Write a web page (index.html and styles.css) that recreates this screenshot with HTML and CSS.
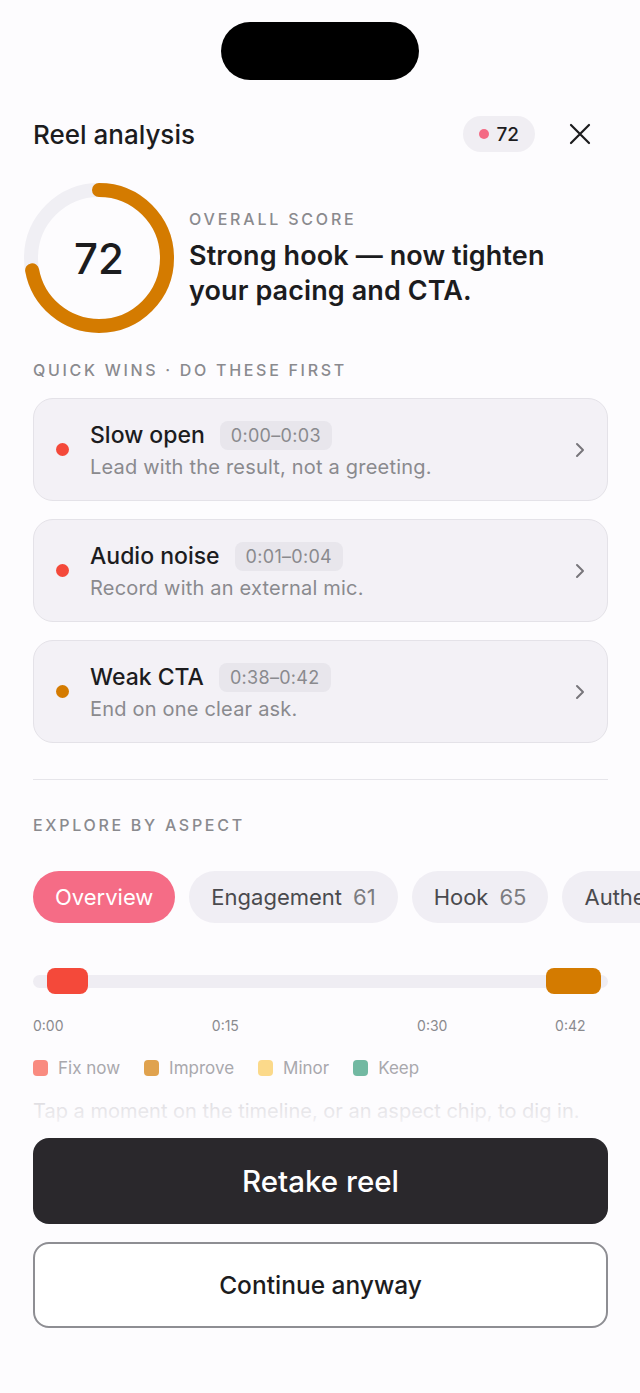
FILE: index.html
```html
<!DOCTYPE html>
<html lang="en">
<head>
<meta charset="utf-8">
<title>Reel analysis</title>
<link rel="stylesheet" href="styles.css">
</head>
<body>
<div class="screen">
  <div class="island"></div>
  <main class="content">
    <header class="topbar">
      <h1 class="title">Reel analysis</h1>
      <div class="score-pill"><span class="pill-dot"></span><span>72</span></div>
      <button class="close" aria-label="Close">
        <svg viewBox="0 0 22 22"><path d="M2 2 L20 20 M20 2 L2 20"/></svg>
      </button>
    </header>

    <section class="score">
      <div class="ring">
        <svg viewBox="0 0 150 150">
          <circle class="ring-track" cx="75" cy="75" r="68"/>
          <circle class="ring-fill" cx="75" cy="75" r="68" stroke-dasharray="307.6 427.3" transform="rotate(-90 75 75)"/>
        </svg>
        <span class="ring-value">72</span>
      </div>
      <div class="score-text">
        <div class="score-label">OVERALL SCORE</div>
        <p class="score-headline">Strong hook — now tighten your pacing and CTA.</p>
      </div>
    </section>

    <div class="section-label first">QUICK WINS · DO THESE FIRST</div>
    <div class="wins">
      <div class="win">
        <span class="win-dot red"></span>
        <div class="win-body">
          <div class="win-head"><span class="win-title">Slow open</span><span class="win-time">0:00–0:03</span></div>
          <div class="win-desc">Lead with the result, not a greeting.</div>
        </div>
        <svg class="chev" viewBox="0 0 10 16"><path d="M2 2 L8 8 L2 14"/></svg>
      </div>
      <div class="win">
        <span class="win-dot red"></span>
        <div class="win-body">
          <div class="win-head"><span class="win-title">Audio noise</span><span class="win-time">0:01–0:04</span></div>
          <div class="win-desc">Record with an external mic.</div>
        </div>
        <svg class="chev" viewBox="0 0 10 16"><path d="M2 2 L8 8 L2 14"/></svg>
      </div>
      <div class="win">
        <span class="win-dot orange"></span>
        <div class="win-body">
          <div class="win-head"><span class="win-title">Weak CTA</span><span class="win-time">0:38–0:42</span></div>
          <div class="win-desc">End on one clear ask.</div>
        </div>
        <svg class="chev" viewBox="0 0 10 16"><path d="M2 2 L8 8 L2 14"/></svg>
      </div>
    </div>

    <div class="divider"></div>

    <div class="section-label explore">EXPLORE BY ASPECT</div>
    <div class="chips">
      <span class="chip active">Overview</span>
      <span class="chip">Engagement <span class="chip-num">61</span></span>
      <span class="chip">Hook <span class="chip-num">65</span></span>
      <span class="chip">Authenticity <span class="chip-num">78</span></span>
    </div>

    <div class="timeline">
      <div class="track"></div>
      <span class="marker red" style="left:2.43%; width:7.13%"></span>
      <span class="marker orange" style="left:89.2%; width:9.57%"></span>
    </div>
    <div class="ticks">
      <span class="tick" style="left:0%">0:00</span>
      <span class="tick" style="left:31.1%">0:15</span>
      <span class="tick" style="left:66.8%">0:30</span>
      <span class="tick" style="left:90.8%">0:42</span>
    </div>

    <div class="legend">
      <span class="legend-item"><span class="swatch fix"></span>Fix now</span>
      <span class="legend-item"><span class="swatch improve"></span>Improve</span>
      <span class="legend-item"><span class="swatch minor"></span>Minor</span>
      <span class="legend-item"><span class="swatch keep"></span>Keep</span>
    </div>

    <p class="hint">Tap a moment on the timeline, or an aspect chip, to dig in.</p>
  </main>

  <div class="actions">
    <button class="btn btn-primary">Retake reel</button>
    <button class="btn btn-secondary">Continue anyway</button>
  </div>
</div>
</body>
</html>
```

FILE: styles.css
```css
* { box-sizing: border-box; }

body {
  margin: 0;
  background: #fdfcfe;
  font-family: Inter, "Noto Sans", sans-serif;
  color: #1c1c1e;
}

.screen {
  position: relative;
  width: 640px;
  height: 1393px;
  overflow: hidden;
  background: #fdfcfe;
}

.island {
  width: 198px;
  height: 58px;
  margin: 22px auto 0;
  border-radius: 29px;
  background: #000;
}

.content {
  padding: 0 32px 0 33px;
}

/* header */
.topbar {
  display: flex;
  align-items: center;
  height: 36px;
  margin-top: 36px;
}

.title {
  flex: 1;
  margin: 0;
  font-size: 26px;
  font-weight: 500;
  letter-spacing: 0;
}

.score-pill {
  display: flex;
  align-items: center;
  gap: 7px;
  height: 36px;
  padding: 0 16px 0 16px;
  border-radius: 18px;
  background: #f0eef3;
  font-size: 19px;
  font-weight: 500;
}

.pill-dot {
  width: 10px;
  height: 10px;
  border-radius: 50%;
  background: #f46a84;
}

.close {
  width: 22px;
  height: 22px;
  margin: 0 17px 0 34px;
  padding: 0;
  border: 0;
  background: none;
}

.close svg {
  display: block;
  width: 22px;
  height: 22px;
  fill: none;
  stroke: #1c1c1e;
  stroke-width: 2.2;
  stroke-linecap: round;
}

/* score */
.score {
  display: flex;
  align-items: center;
  gap: 15px;
  margin: 31px 0 0 -9px;
}

.ring {
  position: relative;
  flex: none;
  width: 150px;
  height: 150px;
}

.ring svg {
  display: block;
  width: 150px;
  height: 150px;
}

.ring-track {
  fill: none;
  stroke: #f0eff4;
  stroke-width: 14;
}

.ring-fill {
  fill: none;
  stroke: #d47b00;
  stroke-width: 14;
  stroke-linecap: round;
}

.ring-value {
  position: absolute;
  inset: 0;
  display: flex;
  align-items: center;
  justify-content: center;
  font-size: 42px;
  font-weight: 500;
}

.score-text {
  max-width: 410px;
  padding-top: 2px;
}

.score-label {
  font-size: 16px;
  line-height: 18px;
  font-weight: 500;
  letter-spacing: 2.8px;
  color: #8a8a8e;
}

.score-headline {
  margin: 10px 0 0;
  font-size: 27px;
  line-height: 35px;
  font-weight: 600;
  letter-spacing: 0.1px;
}

/* section labels */
.section-label {
  font-size: 16px;
  line-height: 18px;
  font-weight: 500;
  letter-spacing: 2.7px;
  color: #8a8a8e;
}

.section-label.first { margin-top: 28px; }
.section-label.explore { margin-top: 36px; }

/* quick wins */
.wins {
  display: flex;
  flex-direction: column;
  gap: 18px;
  margin-top: 19px;
}

.win {
  display: flex;
  align-items: center;
  height: 103px;
  padding: 0 22px;
  border: 1px solid #e4e2e8;
  border-radius: 20px;
  background: #f3f1f6;
}

.win-dot {
  flex: none;
  width: 13px;
  height: 13px;
  margin-right: 21px;
  border-radius: 50%;
}

.win-dot.red { background: #f4493a; }
.win-dot.orange { background: #d47b00; }

.win-body { flex: 1; }

.win-head {
  display: flex;
  align-items: center;
  gap: 15px;
  height: 29px;
}

.win-title {
  font-size: 23px;
  font-weight: 500;
}

.win-time {
  display: flex;
  align-items: center;
  height: 29px;
  padding: 0 11px;
  border-radius: 8px;
  background: #e8e6ec;
  font-size: 18px;
  letter-spacing: 0.3px;
  color: #8a8a8e;
}

.win-desc {
  margin-top: 5px;
  font-size: 20px;
  line-height: 24px;
  letter-spacing: 0.2px;
  color: #8a8a8e;
}

.chev {
  flex: none;
  width: 10px;
  height: 16px;
  fill: none;
  stroke: #77767b;
  stroke-width: 2;
  stroke-linecap: round;
  stroke-linejoin: round;
}

.divider {
  height: 1px;
  margin-top: 36px;
  background: #e6e5ea;
}

/* chips */
.chips {
  display: flex;
  gap: 14px;
  margin: 37px -32px 0 0;
  overflow: hidden;
}

.chip {
  flex: none;
  display: flex;
  align-items: center;
  gap: 11px;
  height: 52px;
  padding: 0 22px;
  border-radius: 26px;
  background: #f0eef4;
  font-size: 22px;
  color: #4a4a4e;
}

.chip.active {
  background: #f56c86;
  color: #fff;
}

.chip-num { color: #7c7c80; }

/* timeline */
.timeline {
  position: relative;
  display: flex;
  align-items: center;
  height: 26px;
  margin-top: 45px;
}

.track {
  flex: 1;
  height: 13px;
  border-radius: 7px;
  background: #efedf3;
}

.marker {
  position: absolute;
  top: 0;
  height: 26px;
  border-radius: 8px;
}

.marker.red { background: #f4493a; }
.marker.orange { background: #d47b00; }

.ticks {
  position: relative;
  height: 18px;
  margin-top: 23px;
  font-size: 14px;
  line-height: 18px;
  color: #8a8a8e;
}

.tick { position: absolute; top: 0; }

.legend {
  display: flex;
  align-items: center;
  gap: 24px;
  margin-top: 23px;
  height: 20px;
}

.legend-item {
  display: flex;
  align-items: center;
  gap: 10px;
  font-size: 17px;
  color: #a9a8ad;
}

.swatch {
  width: 15px;
  height: 16px;
  border-radius: 4px;
}

.swatch.fix { background: #f98b80; }
.swatch.improve { background: #e0a24e; }
.swatch.minor { background: #fbd98a; }
.swatch.keep { background: #72b9a2; }

.hint {
  margin: 21px 0 0;
  font-size: 20px;
  line-height: 24px;
  white-space: nowrap;
  color: #c4c2c8;
}

/* bottom actions */
.actions {
  position: absolute;
  left: 0;
  right: 0;
  bottom: 0;
  display: flex;
  flex-direction: column;
  gap: 18px;
  padding: 48px 32px 65px 33px;
  background: linear-gradient(to bottom, rgba(253, 252, 254, 0.3), #fdfcfe 46px);
}

.btn {
  height: 86px;
  border-radius: 16px;
  font-family: inherit;
  font-weight: 500;
}

.btn-primary {
  border: 0;
  background: #2a282c;
  color: #fff;
  font-size: 29.5px;
}

.btn-secondary {
  border: 2px solid #8e8e93;
  background: #fff;
  color: #1c1c1e;
  font-size: 24.5px;
}
```
